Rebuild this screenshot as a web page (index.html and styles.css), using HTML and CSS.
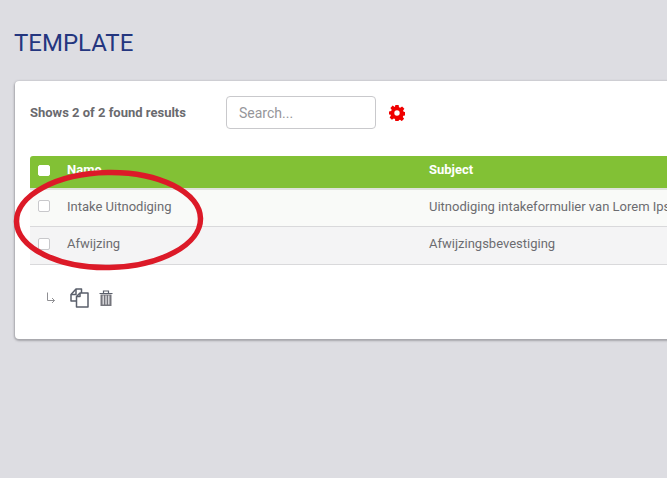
FILE: index.html
```html
<!DOCTYPE html>
<html lang="nl">
<head>
<meta charset="utf-8">
<title>Template</title>
<link rel="stylesheet" href="styles.css">
</head>
<body>
<main class="page">
  <h1 class="title">TEMPLATE</h1>
  <section class="card">
    <div class="toolbar">
      <span class="count">Shows 2 of 2 found results</span>
      <input class="search" type="text" placeholder="Search...">
      <svg class="gear" width="16" height="16" viewBox="0 0 16 16"><path fill="#f00000" fill-rule="evenodd" d="M6.400 0h3.200l.4 2.200 1.200.5L13.100 1.400l2.300 2.300-1.300 1.900.5 1.200 1.900.4v3.200l-2.200.4-.5 1.200 1.300 1.800-2.300 2.300-1.800-1.300-1.200.5-.4 1.900H6.400L6 14l-1.200-.5-1.900 1.300-2.300-2.300 1.300-1.800-.5-1.200L0 9.600V6.400L2.200 6l.5-1.200-1.300-1.900 2.300-2.300 1.900 1.300L6 1.400zM8 5.300a2.700 2.700 0 1 0 0 5.400 2.700 2.700 0 0 0 0-5.400z"/></svg>
    </div>
    <div class="table">
      <div class="row head">
        <span class="cell-check"><span class="box box-head"></span></span>
        <span class="cell-name">Name</span>
        <span class="cell-subject">Subject</span>
      </div>
      <div class="row odd">
        <span class="cell-check"><span class="box"></span></span>
        <span class="cell-name">Intake Uitnodiging</span>
        <span class="cell-subject">Uitnodiging intakeformulier van Lorem Ipsum</span>
      </div>
      <div class="row even">
        <span class="cell-check"><span class="box"></span></span>
        <span class="cell-name">Afwijzing</span>
        <span class="cell-subject">Afwijzingsbevestiging</span>
      </div>
    </div>
    <div class="actions">
      <svg class="act-arrow" width="10" height="12" viewBox="0 0 10 12"><path fill="none" stroke="#8f8f93" d="M1.500 0.500v8h7M6 6l2.500 2.500L6 11"/></svg>
      <svg class="act-copy" width="19" height="20" viewBox="0 0 19 20"><g fill="#fff" stroke="#5a5f6b" stroke-width="1.500" stroke-linejoin="round"><path d="M1 6.500 6 1h5.500v12H1z"/><path d="M6.500 8.500 10 5h8v14H6.500z"/><path d="M6 1v5.500H1M10 5v3.500H6.500" fill="none"/></g></svg>
      <svg class="act-trash" width="14" height="16" viewBox="0 0 14 16"><path fill="none" stroke="#5a5f6b" stroke-width="1.200" d="M.5 3.500h13M4.500 3V1h5v2"/><path fill="#74757c" d="M1.500 4.500h11V16h-11z"/><path fill="#d5d5d8" d="M3.500 5.500h1.500v9H3.500zM6.300 5.500h1.500v9H6.300zM9 5.500h1.500v9H9z"/></svg>
    </div>
  </section>
</main>
<svg class="circle" width="200" height="110" viewBox="0 0 200 110"><ellipse cx="98.500" cy="54" rx="92" ry="47.500" fill="none" stroke="#dc1a28" stroke-width="5.500" transform="rotate(-1 98.500 54)"/></svg>
</body>
</html>
```
FILE: styles.css
```css
html, body {
  margin: 0;
  padding: 0;
  height: 100%;
  overflow: hidden;
  background: #dddde2;
  font-family: Roboto, "Liberation Sans", sans-serif;
}
.page {
  padding: 28px 0 0 15px;
  width: 900px;
}
.title {
  margin: 0 0 23px -1px;
  font-size: 24px;
  line-height: 30px;
  font-weight: 400;
  color: #24367f;
}
.card {
  background: #fff;
  border-radius: 4px;
  box-shadow: 0 1px 2px 1px rgba(120, 120, 125, .55);
  height: 258px;
  padding: 15px 15px 0;
  box-sizing: border-box;
}
.toolbar {
  display: flex;
  align-items: center;
  height: 33px;
}
.count {
  width: 196px;
  font-size: 13px;
  font-weight: 700;
  color: #6a6a6e;
  padding-bottom: 1px;
}
.search {
  width: 150px;
  height: 33px;
  box-sizing: border-box;
  border: 1px solid #c9c9cc;
  border-radius: 4px;
  padding: 0 12px;
  font: 14px Roboto, sans-serif;
  background: #fff;
}
.search::placeholder {
  color: #96969a;
  opacity: 1;
}
.gear {
  margin-left: 13px;
}
.table {
  margin-top: 27px;
}
.row {
  display: flex;
  align-items: center;
  font-size: 13px;
  color: #6c6c70;
  box-sizing: border-box;
  padding-bottom: 4px;
}
.head {
  height: 32px;
  padding-bottom: 6px;
  background: #82c135;
  color: #fff;
  font-weight: 700;
  border-radius: 3px 0 0 0;
}
.odd {
  height: 39px;
  padding-bottom: 5px;
  background: #f9faf8;
  border-top: 2px solid #dfe3da;
  border-bottom: 1px solid #d9d9db;
}
.even {
  height: 38px;
  background: #f4f4f5;
  border-bottom: 1px solid #d9d9db;
}
.odd .cell-name,
.odd .cell-subject {
  padding-top: 1px;
}
.cell-check {
  width: 37px;
  display: flex;
  padding-left: 8px;
  box-sizing: border-box;
}
.box {
  width: 12px;
  height: 12px;
  box-sizing: border-box;
  border: 1px solid #c8c8cb;
  border-radius: 2px;
  background: #fff;
}
.box-head {
  border-color: #fff;
  height: 11px;
  margin-top: 2px;
}
.cell-name {
  width: 362px;
}
.cell-subject {
  white-space: nowrap;
}
.actions {
  display: flex;
  align-items: center;
  margin-top: 23px;
  padding-left: 16px;
}
.act-copy {
  margin-left: 14px;
}
.act-trash {
  margin-left: 10px;
}
.circle {
  position: absolute;
  left: 10px;
  top: 166px;
}
```
